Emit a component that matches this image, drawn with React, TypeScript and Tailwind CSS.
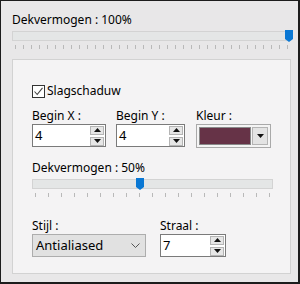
import React from 'react'

const font = { fontFamily: '"Noto Sans", "Open Sans", sans-serif' }

function Spinner() {
  return (
    <div className="flex flex-col gap-[2px] mr-[1px]">
      <div className="w-[14px] h-[9px] bg-[#e6e6e6] border border-[#b4b4b4] flex items-center justify-center">
        <svg width="7" height="4" viewBox="0 0 7 4"><path d="M0 4 L3.5 0 L7 4 Z" fill="#111" /></svg>
      </div>
      <div className="w-[14px] h-[9px] bg-[#e6e6e6] border border-[#b4b4b4] flex items-center justify-center">
        <svg width="7" height="4" viewBox="0 0 7 4"><path d="M0 0 L7 0 L3.5 4 Z" fill="#111" /></svg>
      </div>
    </div>
  )
}

function NumberBox({ value, width }: { value: string; width: string }) {
  return (
    <div className={`${width} h-[23px] bg-white border border-[#7a7a7a] flex items-center justify-between`}>
      <span className="pl-[2px] text-[13px] text-black leading-none">{value}</span>
      <Spinner />
    </div>
  )
}

function Thumb() {
  return (
    <svg width="8" height="12" viewBox="0 0 8 12">
      <path d="M0 0 H8 V9 L4 12 L0 9 Z" fill="#0a78d4" />
    </svg>
  )
}

function Slider({ ticks, trackWidth, thumbLeft }: { ticks: number; trackWidth: string; thumbLeft: string }) {
  return (
    <div className={`${trackWidth}`}>
      <div className="relative h-[10px] bg-[#e4e6e6] border border-[#d3d3d3]">
        <div className={`absolute ${thumbLeft} top-[-2px]`}>
          <Thumb />
        </div>
      </div>
      <div className="flex justify-between px-[3px] mt-[4px]">
        {Array.from({ length: ticks }).map((_, i) => (
          <div key={i} className="w-[1px] h-[4px] bg-[#b9b9b9]" />
        ))}
      </div>
    </div>
  )
}

export default function App() {
  return (
    <div
      style={font}
      className="w-[300px] h-[284px] bg-[#e8e7e8] border-l border-t border-r-2 border-b-2 border-[#1c1c1c] text-[12px] text-black"
    >
      <div className="pl-[11px] pt-[11px]">
        <div className="leading-[16px]">Dekvermogen : 100%</div>
        <div className="mt-[3px]">
          <Slider ticks={35} trackWidth="w-[279px]" thumbLeft="left-[272px]" />
        </div>

        <div className="mt-[10px] w-[279px] h-[215px] bg-[#f4f3f4] border border-[#d2d2d2] pl-[19px]">
          <div className="mt-[23px] flex items-center gap-[2px]">
            <div className="w-[13px] h-[13px] border border-[#333] bg-white flex items-center justify-center">
              <svg width="11" height="11" viewBox="0 0 11 11">
                <path d="M1.5 5.5 L4.2 8.5 L9.5 1.8" fill="none" stroke="#444" strokeWidth="1.1" />
              </svg>
            </div>
            <span className="leading-[16px]">Slagschaduw</span>
          </div>

          <div className="mt-[9px] flex">
            <div className="w-[74px]">
              <div className="leading-[16px]">Begin X :</div>
              <NumberBox value="4" width="w-[74px]" />
            </div>
            <div className="w-[69px] ml-[10px]">
              <div className="leading-[16px]">Begin Y :</div>
              <NumberBox value="4" width="w-[69px]" />
            </div>
            <div className="w-[75px] ml-[11px]">
              <div className="leading-[16px]">Kleur :</div>
              <div className="w-[75px] h-[24px] border border-[#a9a9a9] bg-[#f4f4f4] flex items-center px-[2px] gap-[1px]">
                <div className="w-[54px] h-[18px] bg-[#663347] border border-[#8a8a8a]" />
                <div className="w-[16px] h-[18px] bg-[#e3e3e3] border border-[#b4b4b4] flex items-center justify-center">
                  <svg width="7" height="4" viewBox="0 0 7 4"><path d="M0 0 L7 0 L3.5 4 Z" fill="#111" /></svg>
                </div>
              </div>
            </div>
          </div>

          <div className="mt-[12px] leading-[16px]">Dekvermogen : 50%</div>
          <div className="mt-[3px]">
            <Slider ticks={19} trackWidth="w-[241px]" thumbLeft="left-[103px]" />
          </div>

          <div className="mt-[21px] flex">
            <div className="w-[114px]">
              <div className="leading-[16px]">Stijl :</div>
              <div className="w-[114px] h-[23px] bg-[#e1e1e1] border border-[#adadad] flex items-center justify-between pl-[3px] pr-[5px]">
                <span className="text-[13px] leading-none">Antialiased</span>
                <svg width="9" height="5" viewBox="0 0 9 5">
                  <path d="M0.5 0.5 L4.5 4.5 L8.5 0.5" fill="none" stroke="#555" strokeWidth="1" />
                </svg>
              </div>
            </div>
            <div className="w-[66px] ml-[14px]">
              <div className="leading-[16px]">Straal :</div>
              <NumberBox value="7" width="w-[66px]" />
            </div>
          </div>
        </div>
      </div>
    </div>
  )
}
